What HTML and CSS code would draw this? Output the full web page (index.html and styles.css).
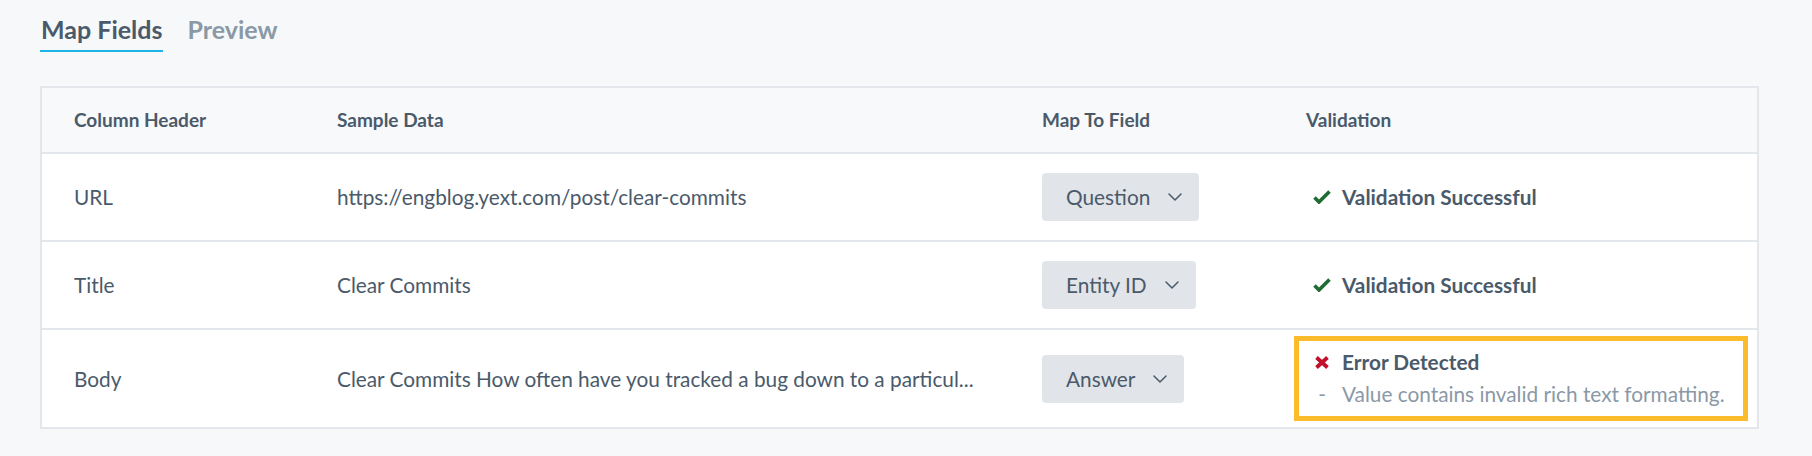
FILE: index.html
```html
<!DOCTYPE html>
<html>
<head>
<meta charset="utf-8">
<link rel="stylesheet" href="styles.css">
</head>
<body>
<div class="page">
  <nav class="tabs">
    <span class="tab tab-active">Map Fields</span>
    <span class="tab">Preview</span>
  </nav>
  <div class="table">
    <div class="row row-head">
      <div class="cell">Column Header</div>
      <div class="cell">Sample Data</div>
      <div class="cell">Map To Field</div>
      <div class="cell">Validation</div>
    </div>
    <div class="row">
      <div class="cell">URL</div>
      <div class="cell">https://engblog.yext.com/post/clear-commits</div>
      <div class="cell">
        <div class="select">Question
          <svg class="chev" viewBox="0 0 14 8" width="14" height="8"><path d="M1 1l6 6 6-6" fill="none" stroke="currentColor" stroke-width="1.5" stroke-linecap="round" stroke-linejoin="round"/></svg>
        </div>
      </div>
      <div class="cell">
        <div class="status">
          <span class="ico"><svg viewBox="0 0 18 14" width="18" height="14"><path d="M1.5 7.5l4.5 4.5 10.5-10.5" fill="none" stroke="#1f6b33" stroke-width="3.6" stroke-linejoin="miter"/></svg></span>
          <span class="status-text">Validation Successful</span>
        </div>
      </div>
    </div>
    <div class="row">
      <div class="cell">Title</div>
      <div class="cell">Clear Commits</div>
      <div class="cell">
        <div class="select">Entity ID
          <svg class="chev" viewBox="0 0 14 8" width="14" height="8"><path d="M1 1l6 6 6-6" fill="none" stroke="currentColor" stroke-width="1.5" stroke-linecap="round" stroke-linejoin="round"/></svg>
        </div>
      </div>
      <div class="cell">
        <div class="status">
          <span class="ico"><svg viewBox="0 0 18 14" width="18" height="14"><path d="M1.5 7.5l4.5 4.5 10.5-10.5" fill="none" stroke="#1f6b33" stroke-width="3.6" stroke-linejoin="miter"/></svg></span>
          <span class="status-text">Validation Successful</span>
        </div>
      </div>
    </div>
    <div class="row row-last">
      <div class="cell">Body</div>
      <div class="cell">Clear Commits How often have you tracked a bug down to a particul...</div>
      <div class="cell">
        <div class="select">Answer
          <svg class="chev" viewBox="0 0 14 8" width="14" height="8"><path d="M1 1l6 6 6-6" fill="none" stroke="currentColor" stroke-width="1.5" stroke-linecap="round" stroke-linejoin="round"/></svg>
        </div>
      </div>
      <div class="cell">
        <div class="error-box">
          <div class="status">
            <span class="ico"><svg viewBox="0 0 14 13" width="14" height="13"><path d="M1.5 1.5l11 10M12.5 1.5l-11 10" fill="none" stroke="#c0102b" stroke-width="3.8"/></svg></span>
            <span class="status-text">Error Detected</span>
          </div>
          <div class="error-desc">
            <span class="ico dash">-</span>
            <span>Value contains invalid rich text formatting.</span>
          </div>
        </div>
      </div>
    </div>
  </div>
</div>
</body>
</html>
```

FILE: styles.css
```css
* { box-sizing: border-box; }
html, body { margin: 0; padding: 0; }
body {
  background: #f7f8fa;
  font-family: Lato, "Open Sans", sans-serif;
  color: #4a5a6a;
}
.page {
  padding: 14px 53px 0 40px;
}
.tabs {
  display: flex;
  gap: 23px;
}
.tab {
  font-size: 25px;
  font-weight: 700;
  line-height: 30px;
  padding: 0 1px 6px 1px;
  color: #8a99a6;
  border-bottom: 2px solid transparent;
}
.tab-active {
  color: #4a5a6a;
  border-bottom-color: #1ab5e6;
}
.table {
  margin-top: 34px;
  border: 2px solid #e3e6ea;
  background: #ffffff;
}
.row {
  display: grid;
  grid-template-columns: 263px 705px 264px 1fr;
  align-items: center;
  padding: 19px 0;
  border-bottom: 2px solid #e3e6ea;
  font-size: 20.8px;
  line-height: 24px;
}
.row-last {
  border-bottom: none;
  padding: 6px 0;
}
.row-head {
  background: #f8f9fa;
  padding: 20px 0;
  font-size: 19px;
  font-weight: 700;
}
.cell {
  padding-left: 32px;
  white-space: nowrap;
}
.select {
  display: inline-flex;
  align-items: center;
  gap: 18px;
  height: 48px;
  padding: 0 17px 0 24px;
  background: #e1e4e8;
  border-radius: 4px;
  color: #4a5a6a;
}
.chev { display: block; color: #4a5a6a; }
.status {
  display: flex;
  align-items: center;
  gap: 10px;
  padding-left: 6px;
}
.ico {
  width: 20px;
  display: flex;
  justify-content: center;
  align-items: center;
}
.ico svg { display: block; }
.status-text {
  font-weight: 700;
}
.error-box {
  margin: 0 9px 0 -12px;
  border: 5px solid #fbbb2b;
  padding: 9px 0 10px 7px;
}
.error-desc {
  display: flex;
  align-items: center;
  gap: 10px;
  padding-left: 6px;
  margin-top: 8px;
  color: #8b98a6;
}
.dash { color: #8b98a6; }
```
